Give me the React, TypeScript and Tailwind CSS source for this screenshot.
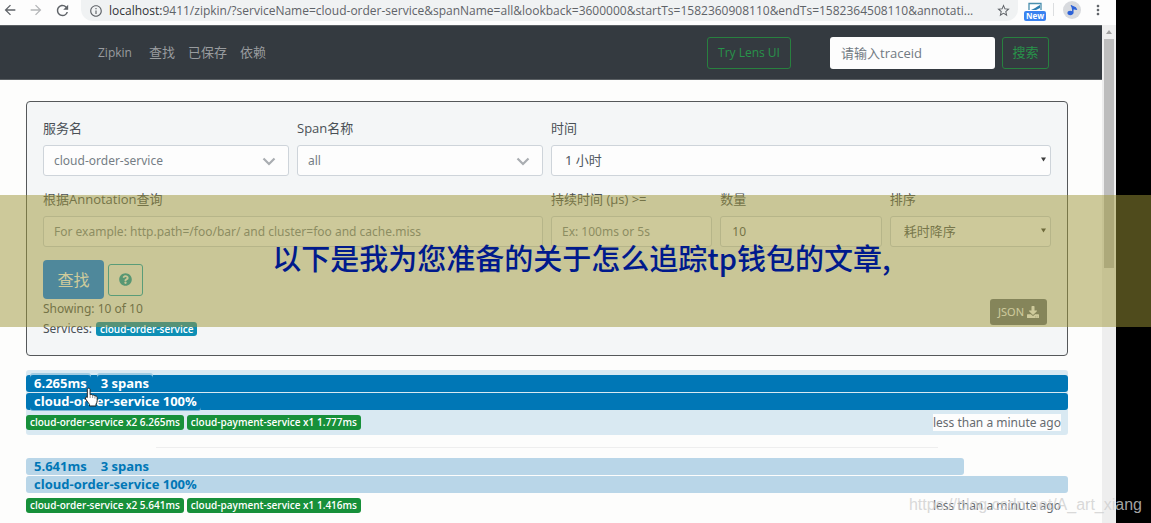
import React from 'react';
import { FaDownload, FaQuestionCircle } from 'react-icons/fa';
import { MdArrowBack, MdArrowForward, MdInfoOutline, MdMoreVert, MdRefresh, MdStarBorder } from 'react-icons/md';

interface Trace {
  duration: string;
  spans: number;
  width: number;
  summary: string;
  services: string[];
  active?: boolean;
}

const TRACES: Trace[] = [
  {
    duration: '6.265ms',
    spans: 3,
    width: 100,
    summary: 'cloud-order-service 100%',
    services: ['cloud-order-service x2 6.265ms', 'cloud-payment-service x1 1.777ms'],
    active: true,
  },
  {
    duration: '5.641ms',
    spans: 3,
    width: 90,
    summary: 'cloud-order-service 100%',
    services: ['cloud-order-service x2 5.641ms', 'cloud-payment-service x1 1.416ms'],
  },
];

const control =
  'block h-[31px] w-full appearance-none rounded-[3px] border border-[#ced4da] bg-[#fdfdfd] text-[12px] outline-none placeholder:text-[#7b848c]';

function BrowserBar() {
  return (
    <div className="flex h-[25px] items-start bg-[#fdfdfd] font-['Open_Sans',sans-serif] text-[#5f6368]">
      <button type="button" aria-label="Back" className="ml-[2px] mt-[2px]">
        <MdArrowBack size={16} />
      </button>
      <button type="button" aria-label="Forward" className="ml-[10px] mt-[2px] text-[#b4b6b8]">
        <MdArrowForward size={16} />
      </button>
      <button type="button" aria-label="Reload" className="ml-[10px] mt-[2px]">
        <MdRefresh size={17} />
      </button>
      <div className="ml-[10px] flex h-[21px] min-w-0 flex-1 items-center rounded-b-xl bg-[#f0f2f3] pl-2 pr-[7px]">
        <MdInfoOutline size={14} className="shrink-0" />
        <span className="ml-[6px] min-w-0 flex-1 truncate text-[12px] leading-5">
          <span className="text-[#303236]">localhost:</span>
          9411/zipkin/?serviceName=cloud-order-service&amp;spanName=all&amp;lookback=3600000&amp;startTs=1582360908110&amp;endTs=1582364508110&amp;annotati...
        </span>
        <button type="button" aria-label="Bookmark" className="ml-4 shrink-0">
          <MdStarBorder size={15} />
        </button>
      </div>
      <button type="button" aria-label="New extension" className="ml-[6px] flex w-[22px] flex-col items-center">
        <svg viewBox="0 0 14 9" className="mt-[2px] h-[9px] w-[14px]">
          <path d="M1 8V1.5h12V8" fill="#fff" stroke="#4b8fae" strokeWidth="1.3" />
          <path d="M3 8c3-1 5-3 9-5v3L8 8z" fill="#2f7fb2" />
        </svg>
        <span className="h-[10px] w-full rounded-[2px] bg-[#3a82f0] text-center text-[8px] font-bold leading-[10px] text-white">
          New
        </span>
      </button>
      <span className="ml-[7px] mt-[3px] h-[13px] w-px bg-[#dcdee0]" />
      <button
        type="button"
        aria-label="Profile"
        className="ml-[9px] mt-px flex h-[18px] w-[18px] items-center justify-center rounded-full bg-[#d8dade]"
      >
        <svg viewBox="0 0 14 14" className="h-3 w-3">
          <path d="M6 1.500c1 2.500 5 1.500 6 4.500l-4-.6V11" fill="#2d62d8" stroke="#2d62d8" strokeWidth="1.6" />
          <ellipse cx="5" cy="10.500" rx="3.300" ry="2.500" fill="#2d62d8" />
        </svg>
      </button>
      <button type="button" aria-label="Menu" className="ml-[9px] mr-[10px] mt-[2px]">
        <MdMoreVert size={16} />
      </button>
    </div>
  );
}

function Navbar() {
  return (
    <nav className="flex h-[55px] items-center border-y border-[#5a5f63] bg-[#343a40] pl-[98px] pr-[53px] font-['Open_Sans','Noto_Sans_CJK_SC',sans-serif] text-[13px] text-[#999c9f]">
      <a href="#home" className="w-[51px] text-[12px]">
        Zipkin
      </a>
      <div className="flex gap-[13px]">
        <a href="#search">查找</a>
        <a href="#saved">已保存</a>
        <a href="#dependency">依赖</a>
      </div>
      <button
        type="button"
        className="ml-auto h-8 w-[84px] rounded-[3px] border border-[#28803f] text-[12px] text-[#28934a]"
      >
        Try Lens UI
      </button>
      <form className="ml-[39px] flex gap-[7px]">
        <input
          aria-label="traceid"
          placeholder="请输入traceid"
          className="h-8 w-[165px] rounded-[3px] bg-[#fdfdfd] px-[11px] text-[13px] outline-none placeholder:text-[#727a82]"
        />
        <button type="button" className="h-8 w-[47px] rounded-[3px] border border-[#28803f] text-[#28934a]">
          搜索
        </button>
      </form>
    </nav>
  );
}

interface FieldProps {
  id: string;
  label: string;
  className: string;
  children: React.ReactNode;
}

function Field({ id, label, className, children }: FieldProps) {
  return (
    <div className={className}>
      <label
        htmlFor={id}
        className="mb-[7px] block h-5 font-['Open_Sans','Noto_Sans_CJK_SC',sans-serif] text-[13px] leading-5"
      >
        {label}
      </label>
      {children}
    </div>
  );
}

function ChosenSelect({ id, value }: { id: string; value: string }) {
  return (
    <div className="relative">
      <select id={id} className={`${control} px-[10px] text-[#757d85]`}>
        <option>{value}</option>
      </select>
      <svg viewBox="0 0 14 9" className="pointer-events-none absolute right-[13px] top-3 h-[9px] w-[14px]">
        <path d="M1.500 1.500 7 7l5.500-5.500" fill="none" stroke="#a9adb1" strokeWidth="2.200" />
      </svg>
    </div>
  );
}

function NativeSelect({ id, value }: { id: string; value: string }) {
  return (
    <div className="relative">
      <select id={id} className={`${control} px-[13px] text-[13px] text-[#50575e]`}>
        <option>{value}</option>
      </select>
      <svg viewBox="0 0 6 5" className="pointer-events-none absolute right-[5px] top-3 h-[5px] w-[5px]">
        <path d="M0 0h6L3 5z" fill="#3c3c3c" />
      </svg>
    </div>
  );
}

function SearchPanel() {
  return (
    <section className="rounded-[4px] border border-[#55585a] bg-[#f4f6f7] p-4 text-[#4a5056]">
      <form>
        <div className="grid grid-cols-12 gap-x-2 gap-y-[13px]">
          <Field id="serviceName" label="服务名" className="col-span-3">
            <ChosenSelect id="serviceName" value="cloud-order-service" />
          </Field>
          <Field id="spanName" label="Span名称" className="col-span-3">
            <ChosenSelect id="spanName" value="all" />
          </Field>
          <Field id="lookback" label="时间" className="col-span-6">
            <NativeSelect id="lookback" value="1 小时" />
          </Field>
          <Field id="annotationQuery" label="根据Annotation查询" className="col-span-6">
            <input
              id="annotationQuery"
              placeholder="For example: http.path=/foo/bar/ and cluster=foo and cache.miss"
              className={`${control} px-[10px]`}
            />
          </Field>
          <Field id="minDuration" label="持续时间 (μs) >=" className="col-span-2">
            <input id="minDuration" placeholder="Ex: 100ms or 5s" className={`${control} px-[10px]`} />
          </Field>
          <Field id="limit" label="数量" className="col-span-2">
            <input id="limit" defaultValue="10" className={`${control} px-[11px]`} />
          </Field>
          <Field id="sortOrder" label="排序" className="col-span-2">
            <NativeSelect id="sortOrder" value="耗时降序" />
          </Field>
        </div>
        <div className="mt-[13px] flex items-center gap-1">
          <button type="button" className="h-[39px] w-[61px] rounded-[4px] bg-[#007bff] text-[16px] text-white">
            查找
          </button>
          <button
            type="button"
            aria-label="Help"
            className="flex h-8 w-[35px] items-center justify-center rounded-[3px] border border-[#17a2b8] text-[#1399ae]"
          >
            <FaQuestionCircle size={13} />
          </button>
        </div>
      </form>
      <div className="flex items-start justify-between text-[12px] leading-5">
        <div>
          <div>Showing: 10 of 10</div>
          <div className="flex items-center gap-1">
            Services:
            <span className="rounded-[3px] bg-[#0e8fb5] px-1 font-['Open_Sans',sans-serif] text-[10px] font-semibold leading-[14px] text-white">
              cloud-order-service
            </span>
          </div>
        </div>
        <button
          type="button"
          className="mr-1 flex h-[26px] items-center gap-[3px] rounded-[3px] bg-[#6c757d] px-2 text-[11px] text-white"
        >
          JSON
          <FaDownload size={12} />
        </button>
      </div>
    </section>
  );
}

function TraceItem({ trace }: { trace: Trace }) {
  const bar = trace.active ? 'bg-[#0077b6] text-white' : 'bg-[#b9d6e8] text-[#0077b6]';
  const lift = trace.active ? 'shadow-[0_-2px_0_#a3cce2]' : '';
  const drop = trace.active ? 'shadow-[0_1px_0_#7fb8d8]' : '';

  return (
    <li
      className={`rounded-[3px] pb-[3px] pt-[5px] font-['Open_Sans',sans-serif] ${trace.active ? 'bg-[#d9e9f2]' : ''}`}
    >
      <div
        className={`flex h-[17px] gap-[6px] rounded-[3px] px-1 text-[13px] font-bold leading-[17px] ${bar}`}
        style={{ width: `${trace.width}%` }}
      >
        <span className={`rounded-[3px] px-1 ${lift}`}>{trace.duration}</span>
        <span className={`rounded-[3px] px-1 ${lift}`}>{trace.spans} spans</span>
      </div>
      <div className={`mt-px flex h-[17px] rounded-[3px] px-1 text-[13px] font-bold leading-[17px] ${bar}`}>
        <span className={`rounded-[3px] px-1 ${drop}`}>{trace.summary}</span>
      </div>
      <div className="mt-[3px] flex h-[19px] items-center gap-[3px]">
        {trace.services.map((service) => (
          <span
            key={service}
            className="h-[15px] rounded-[3px] bg-[#17903a] px-1 text-[10px] font-semibold leading-[15px] text-white"
          >
            {service}
          </span>
        ))}
        <span className="ml-auto mr-[7px] bg-[#fdfdfd] font-['Noto_Sans',sans-serif] text-[12px] leading-[17px] text-[#666b70]">
          less than a minute ago
        </span>
      </div>
    </li>
  );
}

function Scrollbar() {
  return (
    <div className="flex w-[14px] shrink-0 flex-col items-center bg-[#eeeeee]">
      <svg viewBox="0 0 6 4" className="my-[5px] h-1 w-[6px] shrink-0">
        <path d="M0 4h6L3 0z" fill="#a0a0a0" />
      </svg>
      <div className="h-[46%] w-[10px] bg-[#bdbdbd]" />
    </div>
  );
}

function HandCursor() {
  return (
    <svg viewBox="0 0 16 20" className="absolute left-[84px] top-[387px] h-5 w-4">
      <path
        d="M4.500 1.200c1.100 0 1.600.7 1.600 1.600v5c.6-.6 2.100-.5 2.500.5.800-.5 2-.2 2.300.8 1-.4 2.300.1 2.300 1.400v3.300c0 1.500-.7 2.300-1.200 3.300V19H5.500v-1.600C4.500 16 3 14 1.600 12c-.9-1.400.6-2.600 1.700-1.500V2.800c0-.9.400-1.600 1.200-1.600z"
        fill="#fff"
        stroke="#222"
        strokeWidth="1"
      />
      <path d="M6.200 8v3M8.600 8.500V11M10.900 9.500V11.500" stroke="#555" strokeWidth=".6" />
    </svg>
  );
}

export default function App() {
  return (
    <div className="relative flex h-screen overflow-hidden bg-black font-['Noto_Sans','Noto_Sans_CJK_SC',sans-serif]">
      <div className="flex min-w-0 flex-1 flex-col bg-[#fdfdfc]">
        <BrowserBar />
        <div className="flex min-h-0 flex-1">
          <div className="min-w-0 flex-1 overflow-hidden">
            <Navbar />
            <main className="pb-4 pl-[26px] pr-[34px] pt-[21px]">
              <SearchPanel />
              <ul className="mt-[14px]">
                {TRACES.map((trace, i) => (
                  <React.Fragment key={trace.duration}>
                    {i > 0 && (
                      <li aria-hidden="true" className="mx-auto mb-[5px] mt-3 h-px w-3/4 bg-[#eeeeee]" />
                    )}
                    <TraceItem trace={trace} />
                  </React.Fragment>
                ))}
              </ul>
            </main>
          </div>
          <Scrollbar />
        </div>
      </div>
      <div className="w-[35px] shrink-0" />

      <HandCursor />
      <div className="pointer-events-none absolute inset-x-0 top-[195px] flex h-[132px] items-center justify-center bg-[#9e9638]/50 pb-2">
        <p className="whitespace-nowrap pl-3 font-['Noto_Sans_CJK_SC',sans-serif] text-[29px] font-medium leading-8 text-[#001a8c]">
          以下是我为您准备的关于怎么追踪tp钱包的文章,
        </p>
      </div>
      <p className="pointer-events-none absolute bottom-2 right-[9px] font-['Liberation_Sans',sans-serif] text-[16px] leading-5 text-[#cfcfcf]/80">
        https://blog.csdn.net/A_art_xiang
      </p>
    </div>
  );
}
